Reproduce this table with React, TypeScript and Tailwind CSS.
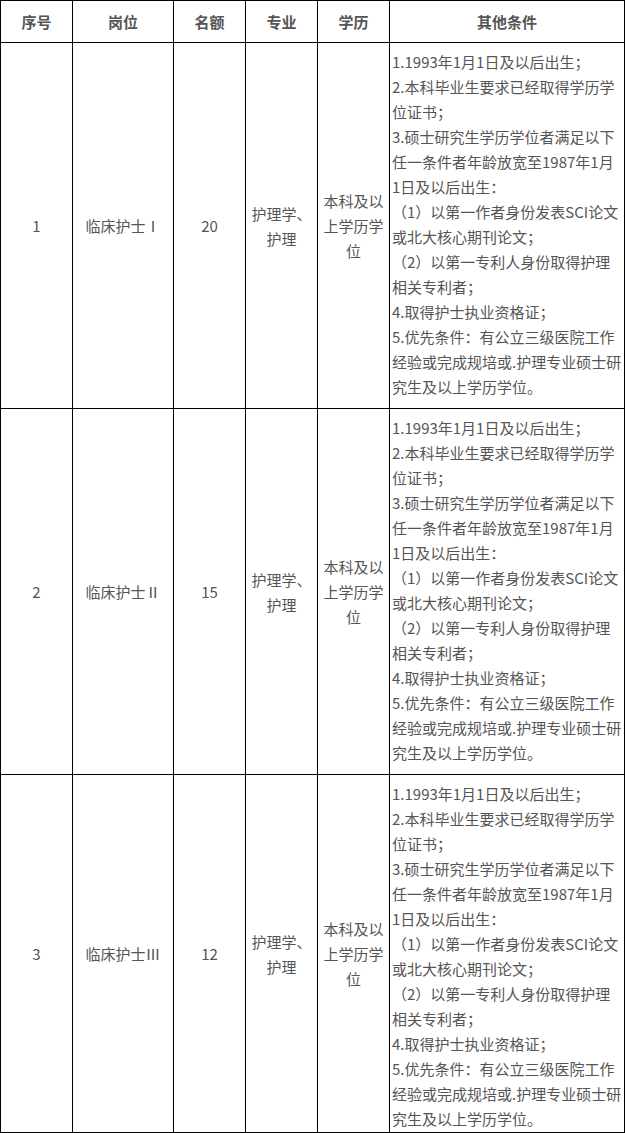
import React from "react";

const conditions = [
  "1.1993年1月1日及以后出生；",
  "2.本科毕业生要求已经取得学历学",
  "位证书；",
  "3.硕士研究生学历学位者满足以下",
  "任一条件者年龄放宽至1987年1月",
  "1日及以后出生：",
  "（1）以第一作者身份发表SCI论文",
  "或北大核心期刊论文；",
  "（2）以第一专利人身份取得护理",
  "相关专利者；",
  "4.取得护士执业资格证；",
  "5.优先条件：有公立三级医院工作",
  "经验或完成规培或.护理专业硕士研",
  "究生及以上学历学位。",
];

const rows = [
  { no: "1", post: "临床护士Ⅰ", num: "20", h: "h-[366px]" },
  { no: "2", post: "临床护士Ⅱ", num: "15", h: "h-[366px]" },
  { no: "3", post: "临床护士Ⅲ", num: "12", h: "h-[358px]" },
];

const cell = "border-r border-b border-black flex items-center justify-center text-center";

export default function App() {
  return (
    <div
      className="w-[625px] bg-white text-[15px] leading-[25px] text-[#555]"
      style={{ fontFamily: '"Noto Sans CJK SC", "Noto Sans", sans-serif' }}
    >
      <div className="grid grid-cols-[72px_101px_72px_72px_72px_235px] border-l border-t border-black">
        {["序号", "岗位", "名额", "专业", "学历", "其他条件"].map((t) => (
          <div key={t} className={`${cell} h-[42px] font-bold text-[#555]`}>
            {t}
          </div>
        ))}
        {rows.map((r) => (
          <React.Fragment key={r.no}>
            <div className={`${cell} ${r.h}`}>{r.no}</div>
            <div className={`${cell} ${r.h}`}>{r.post}</div>
            <div className={`${cell} ${r.h}`}>{r.num}</div>
            <div className={`${cell} ${r.h} flex-col`}>
              <div>护理学、</div>
              <div>护理</div>
            </div>
            <div className={`${cell} ${r.h} flex-col`}>
              <div>本科及以</div>
              <div>上学历学</div>
              <div>位</div>
            </div>
            <div className={`border-r border-b border-black ${r.h} pt-[6px] pl-[2px] overflow-hidden`}>
              {conditions.map((c, i) => (
                <div key={i} className="whitespace-nowrap">
                  {c}
                </div>
              ))}
            </div>
          </React.Fragment>
        ))}
      </div>
    </div>
  );
}
